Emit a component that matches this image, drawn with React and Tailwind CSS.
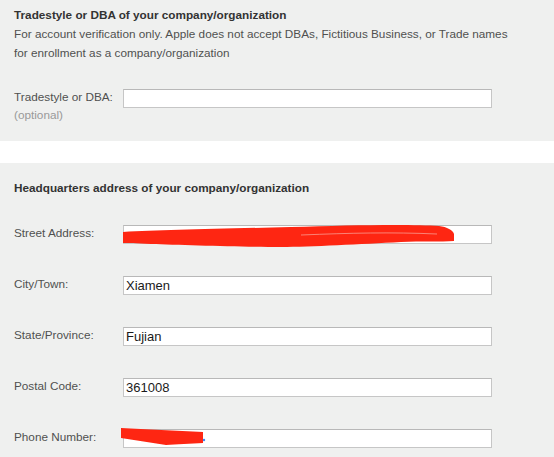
import React from "react";

const font = { fontFamily: '"Liberation Sans", Arial, sans-serif' };

function Row({ label, value, sub, scribble }) {
  return (
    <div className="flex items-start">
      <div className="w-[123px] pl-[14px] shrink-0 whitespace-nowrap">
        <div className="text-[11.75px] leading-[18px] text-[#505050] -mt-[1px]">{label}</div>
        {sub && <div className="text-[11.75px] leading-[18px] text-[#999]">{sub}</div>}
      </div>
      <div className="relative w-[369px] h-[19px] bg-white border border-[#c6c6c6] border-t-[#b8b8b8] shrink-0">
        <div className="pl-[2px] text-[13px] leading-[17px] text-[#1a1a1a]">{value}</div>
        {scribble}
      </div>
    </div>
  );
}

const streetScribble = (
  <svg className="absolute left-[-3px] top-[1px] overflow-visible" width="340" height="26" viewBox="0 0 340 26">
    <path
      d="M2 5 C40 3 90 2 170 0 C230 -2 290 -3 318 -1 C326 0 332 3 333 7 L333 14 C320 15 300 14 280 15 C240 17 190 20 160 20 C120 20 60 18 30 17 C15 16 6 16 2 16 Z"
      fill="#fe2612"
    />
    <path d="M180 8 C230 6 270 5 316 7" stroke="#f8c0b8" strokeWidth="1" fill="none" opacity="0.6" />
  </svg>
);

const phoneScribble = (
  <svg className="absolute left-[-3px] top-[-2px] overflow-visible" width="90" height="20" viewBox="0 0 90 20">
    <path d="M0 0 C25 1 55 3 82 4 L82 15 C70 16 55 16 45 17 C30 15 15 12 0 10 Z" fill="#fe2612" />
    <circle cx="83" cy="12" r="1.2" fill="#3b82f6" />
  </svg>
);

export default function App() {
  return (
    <div className="w-[554px] h-[457px] overflow-hidden bg-[#eff0ef]" style={font}>
      <div className="h-[141px] pt-[5px]">
        <div className="pl-[14px] text-[11.75px] leading-[19px]">
          <div className="font-bold text-[#333]">Tradestyle or DBA of your company/organization</div>
          <div className="text-[#505050]">
            For account verification only. Apple does not accept DBAs, Fictitious Business, or Trade names
            <br />
            for enrollment as a company/organization
          </div>
        </div>
        <div className="mt-[27px]">
          <Row label="Tradestyle or DBA:" sub="(optional)" value="" />
        </div>
      </div>
      <div className="h-[22px] bg-white" />
      <div className="pt-[15px]">
        <div className="pl-[14px] text-[11.75px] leading-[19px] font-bold text-[#333]">
          Headquarters address of your company/organization
        </div>
        <div className="mt-[28px] flex flex-col gap-[32px]">
          <Row label="Street Address:" value="" scribble={streetScribble} />
          <Row label="City/Town:" value="Xiamen" />
          <Row label="State/Province:" value="Fujian" />
          <Row label="Postal Code:" value="361008" />
          <Row label="Phone Number:" value="" scribble={phoneScribble} />
        </div>
      </div>
    </div>
  );
}
